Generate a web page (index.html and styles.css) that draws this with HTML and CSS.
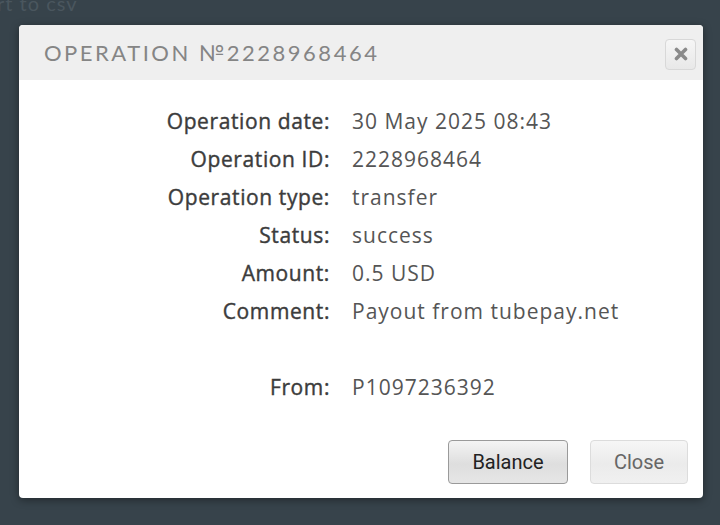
FILE: index.html
```html
<!DOCTYPE html>
<html>
<head>
<meta charset="utf-8">
<link rel="stylesheet" href="styles.css">
</head>
<body>
<div class="backdrop-text">rt to csv</div>
<div class="dialog">
  <div class="dialog-header">
    <div class="dialog-title">OPERATION №2228968464</div>
    <button class="x-btn" aria-label="close">
      <svg width="14" height="14" viewBox="0 0 14 14"><path d="M2.5 2.5 L11.5 11.5 M11.5 2.5 L2.5 11.5" stroke="#8a8a8a" stroke-width="3.6" stroke-linecap="round"/></svg>
    </button>
  </div>
  <div class="dialog-body">
    <div class="details">
      <div class="label">Operation date:</div><div class="value">30 May 2025 08:43</div>
      <div class="label">Operation ID:</div><div class="value">2228968464</div>
      <div class="label">Operation type:</div><div class="value">transfer</div>
      <div class="label">Status:</div><div class="value">success</div>
      <div class="label">Amount:</div><div class="value">0.5 USD</div>
      <div class="label">Comment:</div><div class="value">Payout from tubepay.net</div>
      <div class="label"></div><div class="value"></div>
      <div class="label">From:</div><div class="value">P1097236392</div>
    </div>
    <div class="actions">
      <button class="btn btn-primary">Balance</button>
      <button class="btn btn-light">Close</button>
    </div>
  </div>
</div>
</body>
</html>
```
FILE: styles.css
```css
html, body {
  margin: 0;
  padding: 0;
}
body {
  width: 720px;
  height: 525px;
  background: #37434b;
  overflow: hidden;
  position: relative;
  font-family: "Open Sans", sans-serif;
}
.backdrop-text {
  position: absolute;
  left: -3px;
  top: -9px;
  font-family: "Lato", sans-serif;
  font-size: 20px;
  color: #4a565e;
  letter-spacing: 1px;
}
.dialog {
  position: absolute;
  left: 19px;
  top: 25px;
  width: 684px;
  height: 473px;
  background: #fff;
  border-radius: 4px;
  overflow: hidden;
  box-shadow: 0 2px 8px rgba(0,0,0,0.4);
  display: flex;
  flex-direction: column;
}
.dialog-header {
  height: 55px;
  background: #efefef;
  display: flex;
  align-items: center;
  justify-content: space-between;
  padding: 0 7px 0 25px;
  box-sizing: border-box;
}
.dialog-title {
  font-family: "Lato", sans-serif;
  font-size: 22px;
  letter-spacing: 2.5px;
  color: #858585;
  margin-top: -1px;
}
.x-btn {
  width: 31px;
  height: 31px;
  margin-top: 3px;
  border: 1px solid #d8d8d8;
  border-radius: 4px;
  background: linear-gradient(#f6f6f6, #e8e8e8);
  display: flex;
  align-items: center;
  justify-content: center;
  padding: 0;
}
.dialog-body {
  flex: 1;
  display: flex;
  flex-direction: column;
  padding: 22px 15px 14px 0;
}
.details {
  display: grid;
  grid-template-columns: 311px 1fr;
  column-gap: 22px;
  grid-auto-rows: 38px;
  font-size: 21px;
  line-height: 38px;
}
.label {
  text-align: right;
  color: #3c3c3c;
  font-weight: 400;
  -webkit-text-stroke: 0.4px #3c3c3c;
  letter-spacing: 0.6px;
}
.value {
  color: #555;
  font-weight: 400;
  letter-spacing: 1px;
}
.actions {
  margin-top: auto;
  display: flex;
  justify-content: flex-end;
  gap: 22px;
}
.btn {
  height: 44px;
  font-family: "Roboto", sans-serif;
  font-size: 20px;
  border-radius: 4px;
  padding: 0;
}
.btn-primary {
  width: 120px;
  border: 1px solid #9a9a9a;
  background: linear-gradient(#f4f4f4, #dedede 55%, #e6e6e6);
  color: #222;
}
.btn-light {
  width: 98px;
  border: 1px solid #dcdcdc;
  background: linear-gradient(#f6f6f6, #ebebeb 55%, #f0f0f0);
  color: #666;
}
```
